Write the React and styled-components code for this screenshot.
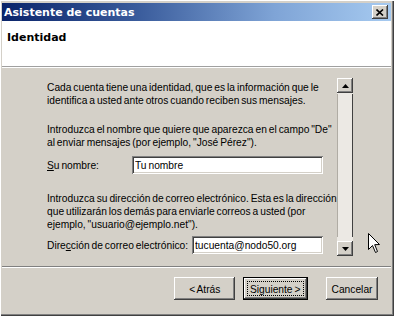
import React from 'react';
import styled, { createGlobalStyle } from 'styled-components';

const GlobalStyle = createGlobalStyle`
  html, body {
    margin: 0;
    padding: 0;
    background: #d4d0c8;
  }
`;

const raised = `
  box-shadow: inset -1px -1px 0 #404040, inset 1px 1px 0 #ffffff,
    inset -2px -2px 0 #808080, inset 2px 2px 0 #d4d0c8;
`;

const sunken = `
  box-shadow: inset 1px 1px 0 #808080, inset -1px -1px 0 #ffffff,
    inset 2px 2px 0 #404040, inset -2px -2px 0 #d4d0c8;
`;

// Tahoma is narrower than Arial: squeeze the regular text a little
const narrow = `
  white-space: nowrap;
  transform: scaleX(0.93);
  transform-origin: left center;
`;

const Window = styled.div`
  position: relative;
  box-sizing: border-box;
  width: 394px;
  height: 316px;
  padding: 3px 3px 3px 2px;
  background: #d4d0c8;
  display: flex;
  flex-direction: column;
  font-family: "Liberation Sans", Arial, sans-serif;
  font-size: 11px;
  word-spacing: -1px;
  color: #000;
  box-shadow: inset 1px 1px 0 #ffffff, inset -1px -1px 0 #404040,
    inset -2px -2px 0 #808080;
  overflow: hidden;
`;

const TitleBar = styled.div`
  height: 18px;
  display: flex;
  align-items: center;
  justify-content: space-between;
  padding: 0 3px 0 2px;
  background: linear-gradient(to right, #0a246a 0%, #3a5c9c 35%, #7fa4d6 70%, #a6caf0 100%);
`;

const Title = styled.span`
  color: #fff;
  font-family: "DejaVu Sans", sans-serif;
  font-weight: bold;
  font-size: 11px;
  word-spacing: 0;
`;

const CloseButton = styled.div`
  width: 16px;
  height: 14px;
  background: #d4d0c8;
  display: flex;
  align-items: center;
  justify-content: center;
  ${raised}
`;

const Header = styled.div`
  height: 46px;
  background: #fff;
  border-bottom: 1px solid #a0a0a0;
  box-shadow: 0 1px 0 #ffffff;
  padding: 10px 0 0 5px;
  box-sizing: border-box;
`;

const HeaderTitle = styled.div`
  font-family: "DejaVu Sans", sans-serif;
  font-weight: bold;
  font-size: 11px;
  line-height: 13px;
  word-spacing: 0;
`;

const Body = styled.div`
  flex: 1;
  display: flex;
  flex-direction: column;
  padding-top: 11px;
`;

const ScrollArea = styled.div`
  height: 178px;
  display: flex;
  padding-left: 45px;
`;

const Content = styled.div`
  width: 276px;
  padding-top: 3px;
  margin-right: 14px;
`;

const Para = styled.p`
  margin: 0 0 ${p => p.$after}px;
  line-height: 13px;
  ${narrow}
`;

const FieldRow = styled.div`
  display: flex;
  align-items: center;
  height: 18px;
  margin-bottom: ${p => p.$after}px;
`;

const Label = styled.label`
  width: ${p => p.$width}px;
  flex-shrink: 0;
  ${narrow}
`;

const TextBox = styled.div`
  flex: 1;
  height: 18px;
  box-sizing: border-box;
  background: #fff;
  padding: 3px 3px 0;
  line-height: 13px;
  white-space: nowrap;
  ${sunken}
`;

const BoxText = styled.span`
  display: inline-block;
  ${narrow}
`;

const ScrollBar = styled.div`
  width: 16px;
  display: flex;
  flex-direction: column;
  background: #ece9e4;
`;

const ArrowButton = styled.div`
  height: 15px;
  flex-shrink: 0;
  background: #d4d0c8;
  display: flex;
  align-items: center;
  justify-content: center;
  ${raised}
`;

const Thumb = styled.div`
  flex: 1;
  background: #ece9e4;
  box-shadow: inset -1px 0 0 #404040, inset 1px 0 0 #b0aca4;
  margin: 1px 0 4px;
`;

const Separator = styled.div`
  margin: 10px 0 0;
  border-top: 1px solid #808080;
  border-bottom: 1px solid #ffffff;
`;

const ButtonRow = styled.div`
  display: flex;
  justify-content: flex-end;
  align-items: center;
  padding: 9px 13px 0 0;
`;

const Button = styled.div`
  box-sizing: border-box;
  width: ${p => p.$width}px;
  height: 23px;
  margin-left: ${p => p.$gap}px;
  background: #d4d0c8;
  display: flex;
  align-items: center;
  justify-content: center;
  white-space: nowrap;
  position: relative;
  ${raised}
  ${p => p.$default && `
    box-shadow: inset 0 0 0 1px #000, inset -2px -2px 0 #404040, inset 2px 2px 0 #ffffff,
      inset -3px -3px 0 #808080;
    &::after {
      content: '';
      position: absolute;
      inset: 4px;
      border: 1px dotted #000;
    }
  `}
`;

const Caption = styled.span`
  display: inline-block;
  white-space: nowrap;
  transform: scaleX(0.93);
`;

const Cursor = styled.svg`
  position: absolute;
  left: 368px;
  top: 233px;
`;

const Triangle = ({ up }) => (
  <svg width="7" height="4" viewBox="0 0 7 4">
    <path d={up ? 'M3.5 0 L7 4 L0 4 Z' : 'M0 0 L7 0 L3.5 4 Z'} fill="#000" />
  </svg>
);

export default function App() {
  return (
    <>
      <GlobalStyle />
      <Window>
        <TitleBar>
          <Title>Asistente de cuentas</Title>
          <CloseButton>
            <svg width="8" height="7" viewBox="0 0 8 7">
              <path d="M0.5 0.5 L7 6.5 M7 0.5 L0.5 6.5" stroke="#000" strokeWidth="1.6" />
            </svg>
          </CloseButton>
        </TitleBar>
        <Header>
          <HeaderTitle>Identidad</HeaderTitle>
        </Header>
        <Body>
          <ScrollArea>
            <Content>
              <Para $after={16}>
                Cada cuenta tiene una identidad, que es la información que le<br />
                identifica a usted ante otros cuando reciben sus mensajes.
              </Para>
              <Para $after={7}>
                Introduzca el nombre que quiere que aparezca en el campo "De"<br />
                al enviar mensajes (por ejemplo, "José Pérez").
              </Para>
              <FieldRow $after={18}>
                <Label $width={85}><u>S</u>u nombre:</Label>
                <TextBox><BoxText>Tu nombre</BoxText></TextBox>
              </FieldRow>
              <Para $after={5}>
                Introduzca su dirección de correo electrónico. Esta es la dirección<br />
                que utilizarán los demás para enviarle correos a usted (por<br />
                ejemplo, "usuario@ejemplo.net").
              </Para>
              <FieldRow $after={0}>
                <Label $width={145}>Dire<u>c</u>ción de correo electrónico:</Label>
                <TextBox><BoxText>tucuenta@nodo50.org</BoxText></TextBox>
              </FieldRow>
            </Content>
            <ScrollBar>
              <ArrowButton><Triangle up /></ArrowButton>
              <Thumb />
              <ArrowButton><Triangle /></ArrowButton>
            </ScrollBar>
          </ScrollArea>
          <Separator />
          <ButtonRow>
            <Button $width={61} $gap={0}><Caption>&lt; Atrás</Caption></Button>
            <Button $width={65} $gap={8} $default><Caption>Siguiente &gt;</Caption></Button>
            <Button $width={52} $gap={18}><Caption>Cancelar</Caption></Button>
          </ButtonRow>
        </Body>
        <Cursor width="13" height="21" viewBox="0 0 13 21">
          <path d="M0.5 0.5 L0.5 16.5 L4.5 12.5 L7.5 19.5 L9.5 18.5 L6.7 11.7 L11.5 11.5 Z" fill="#fff" stroke="#000" strokeWidth="1" />
        </Cursor>
      </Window>
    </>
  );
}
